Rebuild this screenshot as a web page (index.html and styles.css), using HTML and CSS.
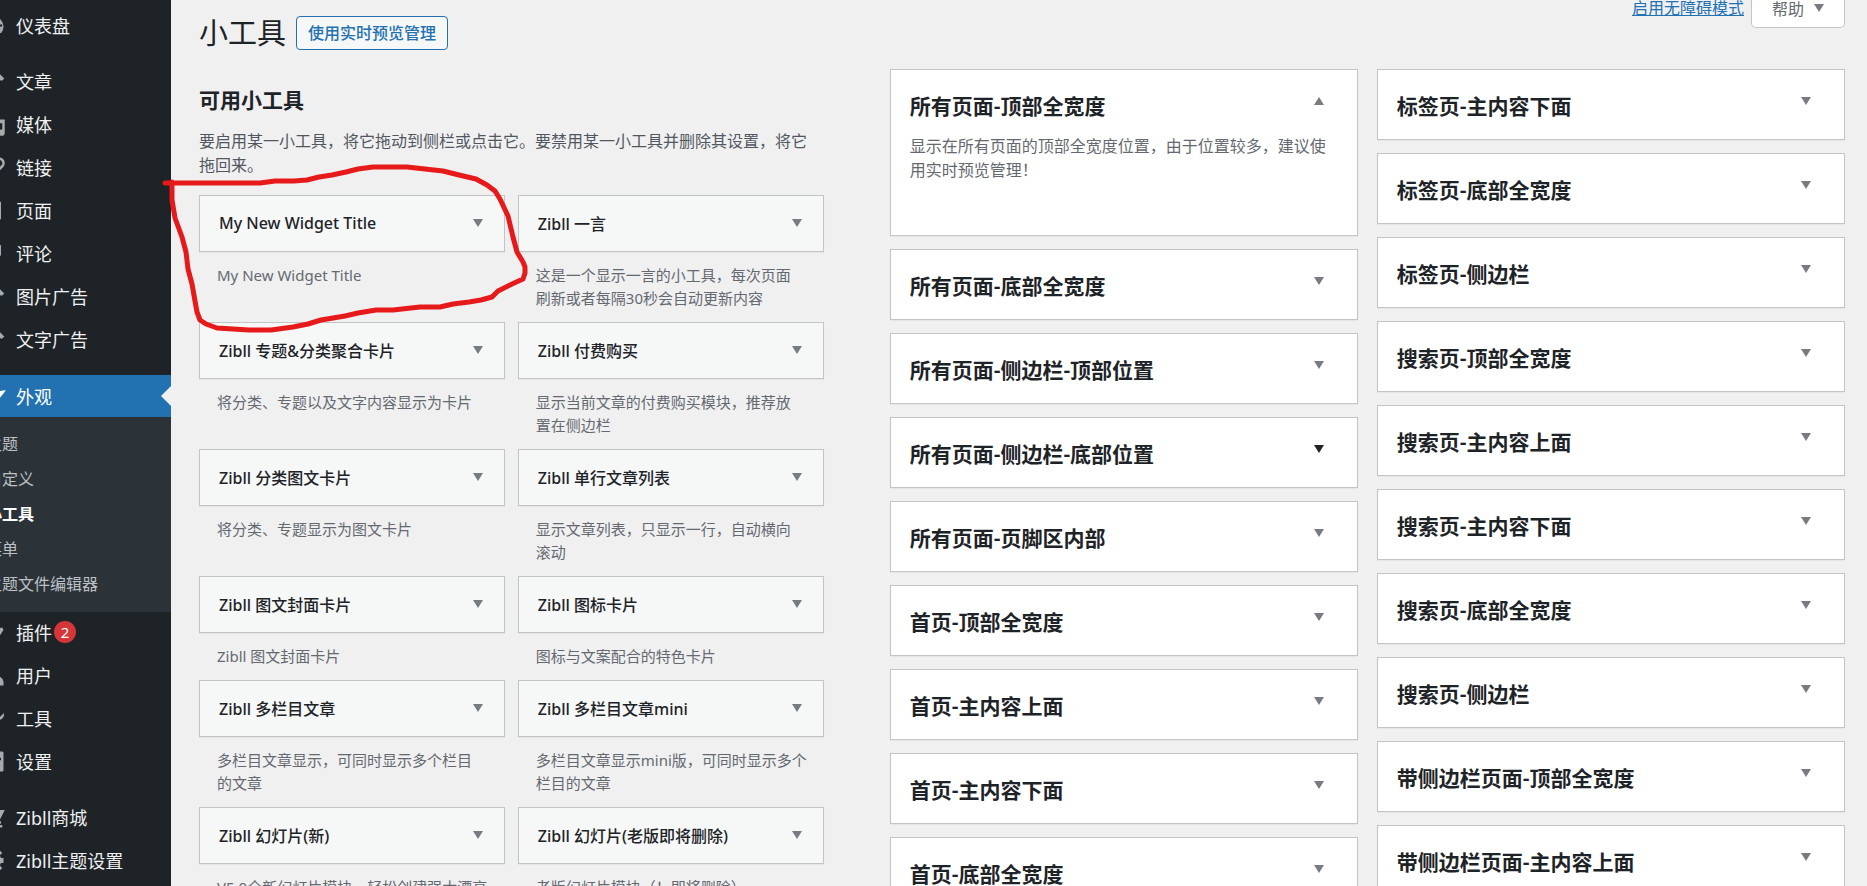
FILE: index.html
```
<!DOCTYPE html>
<html lang="zh-CN">
<head>
  <meta charset="UTF-8" />
  <meta name="viewport" content="width=device-width, initial-scale=1.0"/>
  <title>小工具</title>
  <link rel="stylesheet" href="styles.css">
</head>
<body>

  <svg class="defs">
    <symbol id="pin" viewBox="0 0 20 20"><path d="M10.440 3.020l1.820-1.820 6.360 6.350-1.830 1.820c-1.050-.680-2.480-.570-3.410.360l-.750.750c-.920.930-1.040 2.350-.350 3.410l-1.830 1.820-2.410-2.410-2.800 2.790c-.420.420-3.380 2.710-3.800 2.290s1.860-3.390 2.280-3.810l2.790-2.790L4.100 9.360l1.830-1.820c1.050.690 2.480.570 3.400-.360l.750-.750c.930-.920 1.050-2.350.360-3.410z"/></symbol>
  </svg>

  <nav class="sidebar">
    <ul class="menu">
      <li><a href="#"><svg class="icon" viewBox="0 0 20 20"><path d="M3.800 16h12.400A8 8 0 1 0 3.800 16zM10 4.500a1 1 0 1 1 0 2 1 1 0 0 1 0-2zM5.500 6.500a1 1 0 1 1 0 2 1 1 0 0 1 0-2zM17 10a1 1 0 1 1-2 0 1 1 0 0 1 2 0z" fill-rule="evenodd"/></svg>仪表盘</a></li>
      <li class="gap"><a href="#"><svg class="icon"><use href="#pin"/></svg>文章</a></li>
      <li><a href="#"><svg class="icon" viewBox="0 0 20 20"><path d="M13 11V4c0-.55-.45-1-1-1h-1.670L9 1H5L3.670 3H2c-.55 0-1 .45-1 1v7c0 .55.45 1 1 1h10c.55 0 1-.45 1-1zM7 4.500a2.500 2.500 0 1 1 0 5 2.500 2.500 0 0 1 0-5zM14 6h5v10.500a2.500 2.500 0 1 1-2-2.450V9h-3z" fill-rule="evenodd"/></svg>媒体</a></li>
      <li><a href="#"><svg class="icon" viewBox="0 0 20 20"><path d="M9 7l3-3a3.500 3.500 0 0 1 5 5l-3 3M11 14l-3 3a3.500 3.500 0 0 1-5-5l3-3M7 13l6-6" fill="none" stroke="currentColor" stroke-width="2"/></svg>链接</a></li>
      <li><a href="#"><svg class="icon" viewBox="0 0 20 20"><path d="M4 3h12v14H4z"/></svg>页面</a></li>
      <li><a href="#"><svg class="icon" viewBox="0 0 20 20"><path d="M5 3h10q1 0 1 1v7q0 1-1 1h-5l-4 5v-5H5q-1 0-1-1V4q0-1 1-1z"/></svg>评论</a></li>
      <li><a href="#"><svg class="icon"><use href="#pin"/></svg>图片广告</a></li>
      <li><a href="#"><svg class="icon"><use href="#pin"/></svg>文字广告</a></li>
      <li class="gap current">
        <a href="#"><svg class="icon" viewBox="0 0 20 20"><path d="M20 5l-8 10-5-5q5-5 13-5zM6 11l4 4q-3 4-8 3 3-2 4-7z"/></svg>外观</a>
        <ul class="submenu">
          <li><a href="#">主题</a></li>
          <li><a href="#">自定义</a></li>
          <li><a class="active" href="#">小工具</a></li>
          <li><a href="#">菜单</a></li>
          <li><a href="#">主题文件编辑器</a></li>
        </ul>
      </li>
      <li><a href="#"><svg class="icon" viewBox="0 0 20 20"><path d="M17 6l1 2-4 6-6 3-5 2-1-1 4-5 3-5z"/></svg>插件<span class="count">2</span></a></li>
      <li><a href="#"><svg class="icon" viewBox="0 0 20 20"><path d="M10 9a4 4 0 1 0 0-8 4 4 0 0 0 0 8zM2 18v-3q1-5 8-5t8 5v3z"/></svg>用户</a></li>
      <li><a href="#"><svg class="icon" viewBox="0 0 20 20"><path d="M17 10c-1.200 1.200-3 1.500-4.500 1L6 17.500a2 2 0 0 1-3-3l6.300-6.200c-.5-1.500-.2-3.300 1-4.500 1.200-1.100 2.800-1.500 4.200-1.100L12 5.200 15.300 8.500 18.300 5.500c.4 1.500 0 3.500-1.300 4.500z"/></svg>工具</a></li>
      <li><a href="#"><svg class="icon" viewBox="0 0 20 20"><path d="M3 2h14q1 0 1 1v14q0 1-1 1H3q-1 0-1-1V3q0-1 1-1zM6 4v5H5v2h1v5h2v-5h1V9H8V4zM13 4v3h-2v2h2v7h2V9h1V7h-1V4z" fill-rule="evenodd"/></svg>设置</a></li>
      <li class="gap"><a href="#"><svg class="icon" viewBox="0 0 20 20"><path d="M1 2h3l1 2h14l-4 8H6v1h10v2H4v-3l1-1-2-7H1zM14 16h3v2h-3z"/></svg>Zibll商城</a></li>
      <li><a href="#"><svg class="icon" viewBox="0 0 20 20"><path d="M18 12V8h-2l-1-2 2-2-2-2-2 2-2-1V1H8v2L6 4 4 2 2 4l2 2-1 2H1v4h2l1 2-2 2 2 2 2-2 2 1v2h3v-2l2-1 2 2 2-2-2-2 1-2zM10 7a3 3 0 1 1 0 6 3 3 0 0 1 0-6z" fill-rule="evenodd"/></svg>Zibll主题设置</a></li>
    </ul>
  </nav>

  <main class="content">
    <div class="screen-meta">
      <a class="access" href="#">启用无障碍模式</a>
      <button class="help">帮助 <span class="arrow"></span></button>
    </div>

    <section class="available">
      <div class="title-row">
        <h1>小工具</h1>
        <a class="preview" href="#">使用实时预览管理</a>
      </div>
      <h2>可用小工具</h2>
      <p class="intro">要启用某一小工具，将它拖动到侧栏或点击它。要禁用某一小工具并删除其设置，将它拖回来。</p>

      <div class="widgets">
        <div class="widget">
          <button class="widget-top">My New Widget Title<span class="arrow"></span></button>
          <p>My New Widget Title</p>
        </div>
        <div class="widget">
          <button class="widget-top">Zibll 一言<span class="arrow"></span></button>
          <p>这是一个显示一言的小工具，每次页面<br>刷新或者每隔30秒会自动更新内容</p>
        </div>
        <div class="widget">
          <button class="widget-top">Zibll 专题&amp;分类聚合卡片<span class="arrow"></span></button>
          <p>将分类、专题以及文字内容显示为卡片</p>
        </div>
        <div class="widget">
          <button class="widget-top">Zibll 付费购买<span class="arrow"></span></button>
          <p>显示当前文章的付费购买模块，推荐放<br>置在侧边栏</p>
        </div>
        <div class="widget">
          <button class="widget-top">Zibll 分类图文卡片<span class="arrow"></span></button>
          <p>将分类、专题显示为图文卡片</p>
        </div>
        <div class="widget">
          <button class="widget-top">Zibll 单行文章列表<span class="arrow"></span></button>
          <p>显示文章列表，只显示一行，自动横向<br>滚动</p>
        </div>
        <div class="widget">
          <button class="widget-top">Zibll 图文封面卡片<span class="arrow"></span></button>
          <p>Zibll 图文封面卡片</p>
        </div>
        <div class="widget">
          <button class="widget-top">Zibll 图标卡片<span class="arrow"></span></button>
          <p>图标与文案配合的特色卡片</p>
        </div>
        <div class="widget">
          <button class="widget-top">Zibll 多栏目文章<span class="arrow"></span></button>
          <p>多栏目文章显示，可同时显示多个栏目<br>的文章</p>
        </div>
        <div class="widget">
          <button class="widget-top">Zibll 多栏目文章mini<span class="arrow"></span></button>
          <p>多栏目文章显示mini版，可同时显示多个<br>栏目的文章</p>
        </div>
        <div class="widget">
          <button class="widget-top">Zibll 幻灯片(新)<span class="arrow"></span></button>
          <p>V5.0全新幻灯片模块，轻松创建强大漂亮</p>
        </div>
        <div class="widget">
          <button class="widget-top">Zibll 幻灯片(老版即将删除)<span class="arrow"></span></button>
          <p>老版幻灯片模块（！即将删除）</p>
        </div>
      </div>
    </section>

    <section class="areas">
      <div class="column">
        <div class="area open">
          <button class="area-top">所有页面-顶部全宽度<span class="arrow up"></span></button>
          <p>显示在所有页面的顶部全宽度位置，由于位置较多，建议使用实时预览管理！</p>
        </div>
        <div class="area"><button class="area-top">所有页面-底部全宽度<span class="arrow"></span></button></div>
        <div class="area"><button class="area-top">所有页面-侧边栏-顶部位置<span class="arrow"></span></button></div>
        <div class="area"><button class="area-top">所有页面-侧边栏-底部位置<span class="arrow dark"></span></button></div>
        <div class="area"><button class="area-top">所有页面-页脚区内部<span class="arrow"></span></button></div>
        <div class="area"><button class="area-top">首页-顶部全宽度<span class="arrow"></span></button></div>
        <div class="area"><button class="area-top">首页-主内容上面<span class="arrow"></span></button></div>
        <div class="area"><button class="area-top">首页-主内容下面<span class="arrow"></span></button></div>
        <div class="area"><button class="area-top">首页-底部全宽度<span class="arrow"></span></button></div>
      </div>
      <div class="column">
        <div class="area"><button class="area-top">标签页-主内容下面<span class="arrow"></span></button></div>
        <div class="area"><button class="area-top">标签页-底部全宽度<span class="arrow"></span></button></div>
        <div class="area"><button class="area-top">标签页-侧边栏<span class="arrow"></span></button></div>
        <div class="area"><button class="area-top">搜索页-顶部全宽度<span class="arrow"></span></button></div>
        <div class="area"><button class="area-top">搜索页-主内容上面<span class="arrow"></span></button></div>
        <div class="area"><button class="area-top">搜索页-主内容下面<span class="arrow"></span></button></div>
        <div class="area"><button class="area-top">搜索页-底部全宽度<span class="arrow"></span></button></div>
        <div class="area"><button class="area-top">搜索页-侧边栏<span class="arrow"></span></button></div>
        <div class="area"><button class="area-top">带侧边栏页面-顶部全宽度<span class="arrow"></span></button></div>
        <div class="area"><button class="area-top">带侧边栏页面-主内容上面<span class="arrow"></span></button></div>
      </div>
    </section>
  </main>

  <!-- hand-drawn mark round the first widget -->
  <svg class="mark" viewBox="0 0 380 180"><path d="M10 23H105L120 21H139L152 20L164 17L177 15L191 12L203 9L218 7H252L270 9L288 11L304 15L321 19L332 25L340 31L345 39L353 56L358 77L362 92L368 102L370 107V113L368 119L357 124L343 131L337 137L326 140L314 142L298 144L285 147H265L238 150H221L203 153L190 156L166 160L153 164L138 167L116 170L94 170L78 169L62 168L51 164L45 160L42 152L40 141L37 124L33 109L31 92L27 77L20 58L17 40L17 22"/></svg>

</body>
</html>
```
FILE: styles.css
```
* {
  box-sizing: border-box;
}

body {
  margin: 0;
  height: 100vh;
  overflow: hidden;
  display: flex;
  background: #f0f0f1;
  color: #3c434a;
  font-family: "Noto Sans", "Noto Sans CJK SC", sans-serif;
  font-size: 16px;
}

h1, h2, p, ul {
  margin: 0;
  padding: 0;
}

button {
  font-family: inherit;
  cursor: pointer;
}

.defs {
  display: none;
}

/* sidebar */
.sidebar {
  flex: 0 0 171px;
  overflow: hidden;
  background: #1d2327;
}

.menu {
  width: 200px;
  margin-left: -29px;
  padding-top: 5px;
  list-style: none;
}

.menu a {
  display: flex;
  align-items: center;
  height: 43px;
  padding-bottom: 3px;
  color: #f0f0f1;
  font-size: 18px;
  text-decoration: none;
}

.gap {
  margin-top: 13px;
}

.icon {
  width: 25px;
  height: 25px;
  margin: 0 10px;
  color: #a7aaad;
  fill: currentColor;
}

.menu .current > a {
  height: 42px;
  padding-bottom: 0;
  background: #2271b1;
  color: #fff;
}

.current > a::after {
  content: "";
  margin-left: auto;
  border: 10px solid transparent;
  border-left: 0;
  border-right-color: #f0f0f1;
}

.current .icon {
  color: #fff;
}

.submenu {
  padding: 10px 0;
  background: #2c3338;
  list-style: none;
}

.menu .submenu a {
  height: 35px;
  padding-left: 15px;
  color: #bbc0c4;
  font-size: 16px;
}

.menu .submenu .active {
  color: #fff;
  font-weight: 600;
}

.count {
  width: 22px;
  margin-left: 2px;
  border-radius: 11px;
  background: #d63638;
  color: #fff;
  font-size: 15px;
  line-height: 22px;
  text-align: center;
}

/* content */
.content {
  flex: 1;
  position: relative;
  display: flex;
  gap: 66px;
  padding: 0 22px 0 28px;
}

.screen-meta {
  position: absolute;
  top: 0;
  right: 22px;
  display: flex;
  gap: 7px;
  line-height: 16px;
}

.access {
  color: #2271b1;
}

.help {
  display: flex;
  align-items: center;
  gap: 10px;
  height: 28px;
  padding: 0 20px 12px;
  border: 1px solid #c3c4c7;
  border-top: 0;
  border-radius: 0 0 5px 5px;
  background: #fff;
  color: #646970;
  font-size: 16px;
}

.arrow {
  border: 5px solid transparent;
  border-top: 8px solid #787c82;
  border-bottom: 0;
}

.arrow.up {
  border-top: 0;
  border-bottom: 8px solid #787c82;
}

.arrow.dark {
  border-top-color: #1d2327;
}

.available {
  flex: 17;
}

.title-row {
  display: flex;
  align-items: center;
  gap: 10px;
  padding-top: 13px;
}

h1 {
  color: #1d2327;
  font-size: 29px;
  font-weight: 400;
  line-height: 40px;
}

.preview {
  padding: 0 11px;
  border: 1px solid #2271b1;
  border-radius: 4px;
  background: #f6f7f7;
  color: #2271b1;
  font-weight: 500;
  line-height: 32px;
  text-decoration: none;
}

h2 {
  margin-top: 33px;
  color: #1d2327;
  font-size: 21px;
  font-weight: 600;
  line-height: 28px;
}

.intro {
  margin-top: 15px;
  padding-right: 12px;
  color: #50575e;
  line-height: 24px;
}

.widgets {
  display: grid;
  grid-template-columns: 1fr 1fr;
  column-gap: 13px;
  margin-top: 18px;
}

.widget-top,
.area-top {
  display: flex;
  justify-content: space-between;
  align-items: center;
  width: 100%;
  color: #1d2327;
  font-weight: 600;
  text-align: left;
}

.widget-top {
  height: 57px;
  padding: 0 21px 1px 19px;
  border: 1px solid #c3c4c7;
  background: #f6f7f7;
  box-shadow: 0 1px 1px rgba(0,0,0,0.04);
  font-size: 16px;
  font-weight: 500;
}

.widget p {
  padding: 12px 0 12px 18px;
  color: #646970;
  font-size: 15px;
  line-height: 23px;
  white-space: nowrap;
}

/* widget areas */
.areas {
  flex: 26;
  display: grid;
  grid-template-columns: 1fr 1fr;
  gap: 19px;
  padding-top: 69px;
}

.area {
  height: 71px;
  margin-bottom: 13px;
  border: 1px solid #c3c4c7;
  background: #fff;
  box-shadow: 0 1px 1px rgba(0,0,0,0.04);
}

.area.open {
  height: 167px;
}

.area-top {
  height: 60px;
  padding: 9px 33px 0 19px;
  border: 0;
  background: none;
  font-size: 21px;
}

.area-top .arrow {
  margin-bottom: 8px;
}

.area p {
  padding: 4px 19px;
  color: #646970;
  line-height: 24px;
}

.mark {
  position: absolute;
  left: 155px;
  top: 160px;
  width: 380px;
  height: 180px;
  fill: none;
  stroke: #e71a1b;
  stroke-width: 5;
  stroke-linecap: round;
  stroke-linejoin: round;
  pointer-events: none;
}
```
